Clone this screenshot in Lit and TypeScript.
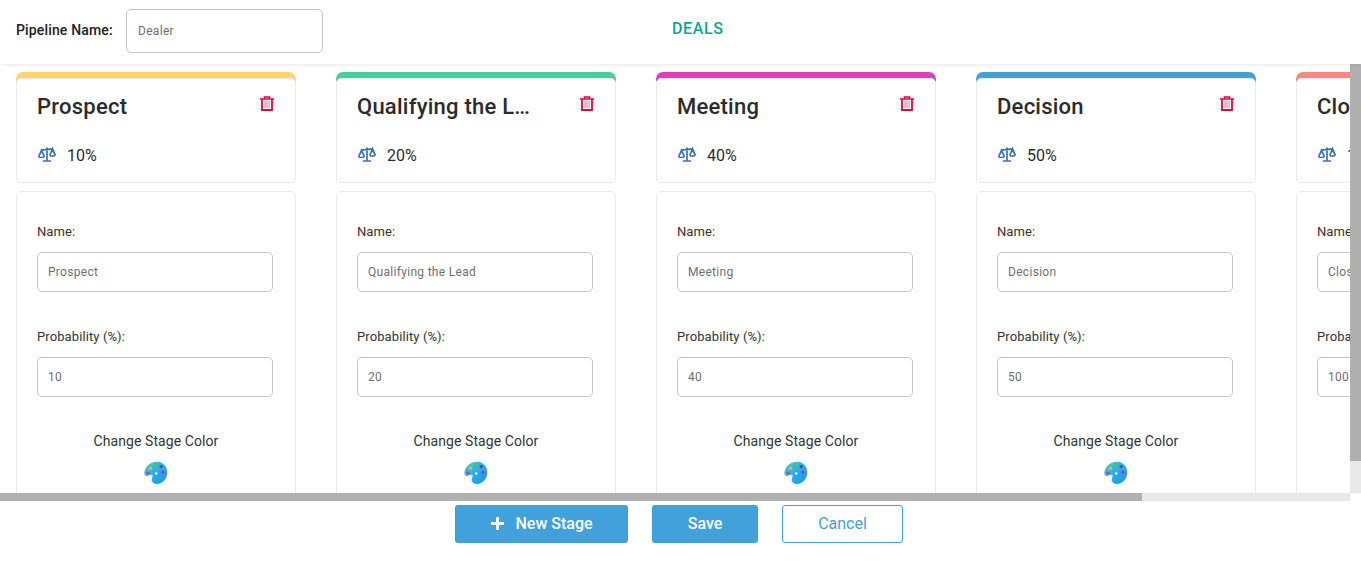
import { LitElement, html, css, svg } from "lit";
import { customElement } from "lit/decorators.js";

const stages = [
  { name: "Prospect", p: 10, color: "#ffd666" },
  { name: "Qualifying the Lead", p: 20, color: "#41d19f" },
  { name: "Meeting", p: 40, color: "#e03bc3" },
  { name: "Decision", p: 50, color: "#42a1da" },
  { name: "Closed", p: 100, color: "#ff8585" },
];

const trash = svg`<svg class="trash" viewBox="0 0 14 15" width="14" height="15" fill="none" stroke="#e6063f">
  <path stroke-width="1.5" d="M0 3h14M4.500 3V1h5v2"/>
  <path stroke-width="1.800" d="M2 3v11h10V3"/>
  <path stroke-width="1" stroke="#ee6f95" d="M5 5v7M7 5v7M9 5v7"/>
</svg>`;

const scale = svg`<svg class="scale" viewBox="0 0 18 15" width="18" height="15" fill="none" stroke="#3a75b9" stroke-width="1.700">
  <path d="M9 .5v13M5 14h8M3.500 3.200 14.500 1.800"/>
  <path d="M3.500 3.200.9 9.300c.3 1.600 4.900 1.600 5.300 0L3.500 3.200ZM14.500 1.800l-2.600 6.100c.3 1.600 4.900 1.600 5.300 0l-2.700-6.100Z"/>
</svg>`;

const palette = svg`<svg viewBox="0 0 24 24" width="24" height="24">
  <defs><linearGradient id="pg" x1="0" y1="0" x2="1" y2="1"><stop offset="0" stop-color="#3fcbf5"/><stop offset="1" stop-color="#1b8fe0"/></linearGradient></defs>
  <path fill="url(#pg)" d="M14 .7C8 .1 2 4 .6 10.300c-.7 3.200.4 4.800 2.600 4.600 2-.2 3.800-1.600 5-.8 1.100.8-.7 3-.5 5 .3 3 3.600 4.600 6.900 3.700 5.500-1.500 9-6.800 8.700-12C23 5.300 19.200 1.200 14 .7Z"/>
  <circle cx="6.500" cy="7.200" r="1.700" fill="#f6b60e"/>
  <circle cx="11.500" cy="4.200" r="1.500" fill="#57c83c"/>
  <circle cx="17.200" cy="5.500" r="1.600" fill="#2a55c0"/>
  <circle cx="18.800" cy="11.200" r="1.700" fill="#7e4bb5"/>
  <circle cx="4" cy="12" r="1.600" fill="#d8357e"/>
  <circle cx="12.200" cy="12.500" r="1.200" fill="#fff"/>
</svg>`;

@customElement("app-root")
export class AppRoot extends LitElement {
  static styles = css`
    :host {
      display: flex;
      flex-direction: column;
      width: 1361px;
      height: 569px;
      background: #fff;
      font-family: Roboto, "Liberation Sans", sans-serif;
      color: #2b2b2b;
      overflow: hidden;
    }
    .top {
      position: relative;
      z-index: 2;
      flex: none;
      height: 64px;
      box-sizing: border-box;
      padding: 9px 0 0 16px;
      background: #fff;
      box-shadow: 0 1px 4px rgba(0, 0, 0, 0.09);
      display: grid;
      grid-template-columns: 110px 197px 1fr;
      align-items: start;
    }
    .pipe-label {
      font-size: 14px;
      font-weight: 500;
      line-height: 42px;
      letter-spacing: 0.15px;
      color: #222;
    }
    .pipe-input {
      height: 44px;
      box-sizing: border-box;
      border: 1px solid #c6c6c6;
      border-radius: 5px;
      padding-left: 11px;
      font-size: 12px;
      letter-spacing: 0.3px;
      line-height: 42px;
      color: #6f6f6f;
    }
    .title {
      margin-left: 349px;
      font-size: 16px;
      font-weight: 500;
      line-height: 40px;
      letter-spacing: 0.6px;
      color: #09a58f;
    }
    .viewport {
      flex: none;
      height: 437px;
      display: grid;
      grid-template-columns: 1350px 11px;
      grid-template-rows: 429px 8px;
      background: #fff;
    }
    .clip { overflow: hidden; }
    .vbar, .hbar { background: #e8e8e8; }
    .vthumb { height: 397px; background: #b0b0b0; }
    .hthumb { width: 1142px; height: 8px; background: #b0b0b0; }
    .board {
      display: flex;
      gap: 40px;
      width: 1596px;
      height: 464px;
      box-sizing: border-box;
      padding: 8px 20px 0 16px;
    }
    .col {
      flex: none;
      width: 280px;
      display: flex;
      flex-direction: column;
      gap: 8px;
    }
    .head {
      height: 111px;
      box-sizing: border-box;
      border-radius: 7px;
      padding-top: 6px;
      flex: none;
    }
    .head-inner {
      height: 105px;
      box-sizing: border-box;
      background: #fff;
      border: 1px solid #e8ebf1;
      border-radius: 5px;
      padding: 14px 20px 0;
      display: flex;
      flex-direction: column;
    }
    .head-row {
      display: flex;
      justify-content: space-between;
      align-items: flex-start;
    }
    .stage-name {
      font-size: 22px;
      font-weight: 500;
      line-height: 28px;
      letter-spacing: 0.24px;
      width: 178px;
      white-space: nowrap;
      overflow: hidden;
      text-overflow: ellipsis;
      color: #2b2b2b;
    }
    .trash { margin: 3px 1px 0 0; display: block; }
    .prob {
      display: flex;
      align-items: center;
      gap: 11px;
      margin-top: 23px;
      font-size: 16px;
      line-height: 24px;
      color: #2b2b2b;
    }
    .scale { display: block; margin: -3px 0 0 1px; }
    .body {
      flex: 1;
      border: 1px solid #e8ebf1;
      border-radius: 5px;
      padding: 32px 22px 0 20px;
    }
    .lbl {
      font-size: 13px;
      line-height: 16px;
      letter-spacing: 0.1px;
      color: #3a3030;
    }
    .field {
      margin: 12px 0 37px;
      height: 40px;
      box-sizing: border-box;
      border: 1px solid #c6c6c6;
      border-radius: 5px;
      padding-left: 10px;
      font-size: 12px;
      letter-spacing: 0.3px;
      line-height: 38px;
      color: #6f6f6f;
      white-space: nowrap;
      overflow: hidden;
    }
    .change {
      text-align: center;
      font-size: 14px;
      line-height: 18px;
      letter-spacing: 0.08px;
      margin: -2px -2px 0 0;
      color: #333;
    }
    .pal {
      display: flex;
      justify-content: center;
      margin: 11px -2px 0 0;
    }
    .actions {
      flex: 1;
      display: flex;
      padding: 4px 0 0 455px;
      gap: 24px;
      align-items: flex-start;
    }
    .btn {
      height: 38px;
      box-sizing: border-box;
      padding-bottom: 2px;
      border-radius: 3px;
      background: #42a1da;
      color: #fff;
      font-size: 16px;
      font-weight: 500;
      display: flex;
      align-items: center;
      justify-content: center;
      gap: 11px;
    }
    .new { width: 173px; padding-left: 1px; }
    .save { width: 106px; }
    .cancel {
      width: 121px;
      background: #fff;
      border: 1px solid #42a1da;
      color: #42a1da;
      font-weight: 400;
    }
  `;

  render() {
    return html`
      <div class="top">
        <div class="pipe-label">Pipeline Name:</div>
        <div class="pipe-input">Dealer</div>
        <div class="title">DEALS</div>
      </div>
      <div class="viewport">
        <div class="clip">
          <div class="board">
            ${stages.map(
              (s) => html`
                <div class="col">
                  <div class="head" style="background:${s.color}">
                    <div class="head-inner">
                      <div class="head-row">
                        <div class="stage-name">${s.name}</div>
                        ${trash}
                      </div>
                      <div class="prob">${scale}<span>${s.p}%</span></div>
                    </div>
                  </div>
                  <div class="body">
                    <div class="lbl">Name:</div>
                    <div class="field">${s.name}</div>
                    <div class="lbl">Probability (%):</div>
                    <div class="field">${s.p}</div>
                    <div class="change">Change Stage Color</div>
                    <div class="pal">${palette}</div>
                  </div>
                </div>
              `
            )}
          </div>
        </div>
        <div class="vbar"><div class="vthumb"></div></div>
        <div class="hbar"><div class="hthumb"></div></div>
      </div>
      <div class="actions">
        <div class="btn new">
          <svg viewBox="0 0 13 13" width="13" height="13"><path fill="#fff" d="M5 0h3v5h5v3H8v5H5V8H0V5h5Z"/></svg>
          <span>New Stage</span>
        </div>
        <div class="btn save">Save</div>
        <div class="btn cancel">Cancel</div>
      </div>
    `;
  }
}
